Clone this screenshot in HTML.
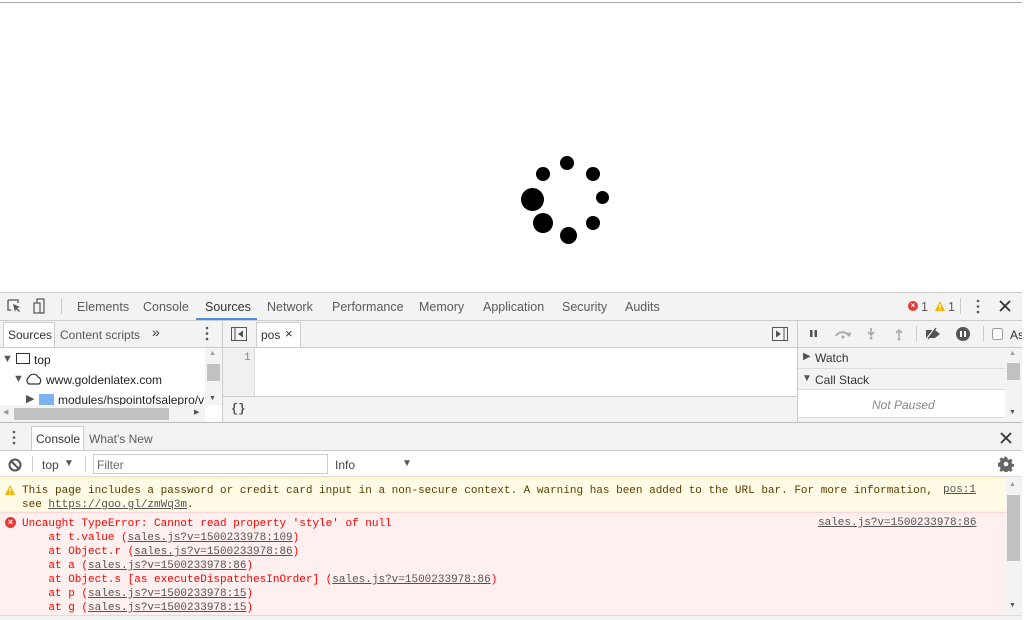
<!DOCTYPE html>
<html><head><meta charset="utf-8"><style>
*{box-sizing:border-box;margin:0;padding:0}
body{width:1034px;height:620px;background:#fff;position:relative;overflow:hidden;font-family:"Liberation Sans",sans-serif;font-size:12px;color:#333}
.a{position:absolute}
.dot{position:absolute;background:#000;border-radius:50%}
.mono{font-family:"Liberation Mono",monospace;font-size:11px}
.tab{position:absolute;top:300px;color:#5a5a5a;font-size:12.5px}
u{text-decoration:underline;color:#545454}
.err u{color:#545454}
</style></head><body>
<div class="a" style="left:0;top:2px;width:1022px;height:1px;background:#aaa"></div>
<div class="dot" style="left:560px;top:156px;width:14px;height:14px"></div>
<div class="dot" style="left:586px;top:167px;width:14px;height:14px"></div>
<div class="dot" style="left:596px;top:191px;width:13px;height:13px"></div>
<div class="dot" style="left:586px;top:216px;width:14px;height:14px"></div>
<div class="dot" style="left:560px;top:227px;width:17px;height:17px"></div>
<div class="dot" style="left:533px;top:213px;width:20px;height:20px"></div>
<div class="dot" style="left:521px;top:188px;width:23px;height:23px"></div>
<div class="dot" style="left:536px;top:167px;width:14px;height:14px"></div>

<div class="a" style="left:0;top:292px;width:1022px;height:328px;background:#f3f3f3;border-top:1px solid #ccc"></div>
<div class="a" style="left:0;top:320px;width:1022px;height:1px;background:#ccc"></div>
<svg class="a" style="left:7px;top:298px" width="42" height="18"><path d="M1 2h10v3M1 2v10h3" fill="none" stroke="#555" stroke-width="1.3"/><path d="M6 6l7 3-3 1 3 3-1 1-3-3-1 3z" fill="#555"/><rect x="27" y="5" width="6" height="10" fill="none" stroke="#555" stroke-width="1.2"/><path d="M30 5V1h7v14h-4" fill="none" stroke="#555" stroke-width="1.2"/></svg>
<div class="a" style="left:61px;top:298px;width:1px;height:16px;background:#ccc"></div>
<span class="tab" style="left:77px">Elements</span>
<span class="tab" style="left:143px">Console</span>
<span class="tab" style="left:205px;color:#333">Sources</span>
<div class="a" style="left:196px;top:318px;width:61px;height:2px;background:#4f8de6"></div>
<span class="tab" style="left:267px">Network</span>
<span class="tab" style="left:332px">Performance</span>
<span class="tab" style="left:419px">Memory</span>
<span class="tab" style="left:483px">Application</span>
<span class="tab" style="left:562px">Security</span>
<span class="tab" style="left:625px">Audits</span>
<div class="a" style="left:908px;top:301px;width:10px;height:10px;border-radius:50%;background:#e53935;color:#fff;font-size:8px;line-height:10px;text-align:center;font-weight:bold">×</div>
<span class="tab" style="left:921px">1</span>
<svg class="a" style="left:934px;top:300px" width="12" height="12"><path d="M6 1L11 11H1z" fill="#f4b400"/><rect x="5.4" y="4" width="1.2" height="4" fill="#fff"/><rect x="5.4" y="9" width="1.2" height="1.2" fill="#fff"/></svg>
<span class="tab" style="left:948px">1</span>
<div class="a" style="left:960px;top:298px;width:1px;height:16px;background:#ccc"></div>
<svg class="a" style="left:975px;top:299px" width="6" height="15"><circle cx="3" cy="2" r="1.3" fill="#555"/><circle cx="3" cy="7.5" r="1.3" fill="#555"/><circle cx="3" cy="13" r="1.3" fill="#555"/></svg>
<svg class="a" style="left:999px;top:300px" width="12" height="12"><path d="M1 1l10 10M11 1L1 11" stroke="#333" stroke-width="1.8"/></svg>

<div class="a" style="left:3px;top:322px;width:52px;height:25px;background:#fff;border:1px solid #ccc;border-bottom:none"></div>
<span class="a" style="left:8px;top:328px;color:#333">Sources</span>
<span class="a" style="left:60px;top:328px;color:#5a5a5a">Content scripts</span>
<span class="a" style="left:152px;top:324px;color:#333;font-size:14px">»</span>
<svg class="a" style="left:204px;top:326px" width="6" height="15"><circle cx="3" cy="2" r="1.3" fill="#555"/><circle cx="3" cy="7.5" r="1.3" fill="#555"/><circle cx="3" cy="13" r="1.3" fill="#555"/></svg>
<div class="a" style="left:222px;top:321px;width:1px;height:102px;background:#ccc"></div>
<svg class="a" style="left:231px;top:327px" width="16" height="14"><rect x=".5" y=".5" width="15" height="13" fill="none" stroke="#555"/><path d="M4 1v12" stroke="#555"/><path d="M12 3.5v7L7 7z" fill="#555"/></svg>
<div class="a" style="left:256px;top:322px;width:45px;height:25px;background:#fff;border:1px solid #ccc;border-bottom:none"></div>
<span class="a" style="left:261px;top:328px;color:#333">pos</span>
<span class="a" style="left:285px;top:326px;color:#333;font-size:13px">×</span>
<svg class="a" style="left:772px;top:327px" width="16" height="14"><rect x=".5" y=".5" width="15" height="13" fill="none" stroke="#555"/><path d="M12 1v12" stroke="#555"/><path d="M4 3.5v7L9 7z" fill="#555"/></svg>
<div class="a" style="left:797px;top:321px;width:1px;height:102px;background:#ccc"></div>
<svg class="a" style="left:805px;top:325px" width="230" height="18"><rect x="5" y="5" width="2.5" height="7" fill="#555"/><rect x="9.5" y="5" width="2.5" height="7" fill="#555"/><path d="M31 11a7 6 0 0 1 13 0" fill="none" stroke="#aaa" stroke-width="2"/><path d="M41 9l4 3 1-5z" fill="#aaa"/><circle cx="38" cy="12" r="1.5" fill="#aaa"/><path d="M66 3v6M63 7l3 3 3-3" fill="none" stroke="#aaa" stroke-width="1.6"/><circle cx="66" cy="13" r="1.5" fill="#aaa"/><path d="M94 12V5M91 8l3-3 3 3" fill="none" stroke="#aaa" stroke-width="1.6"/><circle cx="94" cy="14" r="1.5" fill="#aaa"/><rect x="111" y="1" width="1" height="15" fill="#ccc"/><path d="M121 5h9l5 4-5 4h-9z" fill="#555"/><path d="M121 15l10-13" stroke="#f3f3f3" stroke-width="2"/><path d="M123 14l8-11" stroke="#555" stroke-width="1.4"/><circle cx="158" cy="9" r="7" fill="#555"/><rect x="155" y="6" width="2" height="6" fill="#fff"/><rect x="159" y="6" width="2" height="6" fill="#fff"/><rect x="178" y="1" width="1" height="15" fill="#ccc"/><rect x="187.5" y="3.5" width="10" height="11" rx="2" fill="#fff" stroke="#999"/><text x="205" y="14" font-family="Liberation Sans" font-size="12" fill="#333">As</text></svg>
<div class="a" style="left:0;top:347px;width:1022px;height:1px;background:#ccc"></div>

<div class="a" style="left:0;top:348px;width:222px;height:74px;background:#fff"></div>
<span class="a" style="left:2px;top:353px;font-size:11px;color:#555">▼</span>
<div class="a" style="left:16px;top:353px;width:14px;height:11px;border:1.5px solid #333"></div>
<span class="a" style="left:34px;top:353px;color:#222">top</span>
<span class="a" style="left:13px;top:373px;font-size:11px;color:#555">▼</span>
<svg class="a" style="left:24px;top:372px" width="20" height="14"><path d="M5 12a4 4 0 0 1 0-7 5 5 0 0 1 9 0 4 4 0 0 1 1 7z" fill="none" stroke="#333" stroke-width="1.2"/></svg>
<span class="a" style="left:46px;top:373px;color:#222">www.goldenlatex.com</span>
<span class="a" style="left:26px;top:392px;font-size:11px;color:#555">▶</span>
<div class="a" style="left:39px;top:394px;width:15px;height:12px;background:#7bb2f0;border-radius:1px"></div>
<span class="a" style="left:58px;top:393px;color:#222;width:148px;overflow:hidden;white-space:nowrap;display:block">modules/hspointofsalepro/v</span>
<div class="a" style="left:205px;top:348px;width:17px;height:57px;background:#f3f3f3"></div>
<div class="a" style="left:207px;top:364px;width:13px;height:17px;background:#c1c1c1"></div>
<span class="a" style="left:209px;top:350px;font-size:7px;color:#999">▲</span>
<span class="a" style="left:209px;top:395px;font-size:7px;color:#555">▼</span>
<div class="a" style="left:0;top:405px;width:205px;height:17px;background:#f3f3f3"></div>
<div class="a" style="left:14px;top:408px;width:155px;height:12px;background:#c1c1c1"></div>
<span class="a" style="left:3px;top:408px;font-size:7px;color:#999">◀</span>
<span class="a" style="left:194px;top:408px;font-size:7px;color:#555">▶</span>

<div class="a" style="left:223px;top:348px;width:32px;height:48px;background:#f0f0f0;border-right:1px solid #ddd"></div>
<span class="a mono" style="left:244px;top:352px;color:#888">1</span>
<div class="a" style="left:255px;top:348px;width:542px;height:48px;background:#fff"></div>
<div class="a" style="left:223px;top:396px;width:574px;height:1px;background:#ccc"></div>
<span class="a mono" style="left:231px;top:402px;color:#555;font-weight:bold;font-size:12px">{}</span>

<span class="a" style="left:803px;top:351px;font-size:10px;color:#555">▶</span>
<span class="a" style="left:815px;top:351px;color:#333">Watch</span>
<div class="a" style="left:798px;top:368px;width:207px;height:1px;background:#ddd"></div>
<span class="a" style="left:802px;top:373px;font-size:10px;color:#555">▼</span>
<span class="a" style="left:815px;top:373px;color:#333">Call Stack</span>
<div class="a" style="left:798px;top:389px;width:207px;height:1px;background:#ddd"></div>
<div class="a" style="left:798px;top:390px;width:207px;height:28px;background:#fff;border-bottom:1px solid #ddd"></div>
<span class="a" style="left:872px;top:398px;color:#888;font-style:italic">Not Paused</span>
<div class="a" style="left:1006px;top:348px;width:16px;height:74px;background:#f3f3f3"></div>
<div class="a" style="left:1007px;top:363px;width:13px;height:17px;background:#c1c1c1"></div>
<span class="a" style="left:1009px;top:350px;font-size:7px;color:#999">▲</span>
<span class="a" style="left:1009px;top:409px;font-size:7px;color:#555">▼</span>
<div class="a" style="left:0;top:422px;width:1022px;height:1px;background:#bbb"></div>

<svg class="a" style="left:11px;top:430px" width="6" height="15"><circle cx="3" cy="2" r="1.3" fill="#555"/><circle cx="3" cy="7.5" r="1.3" fill="#555"/><circle cx="3" cy="13" r="1.3" fill="#555"/></svg>
<div class="a" style="left:31px;top:426px;width:53px;height:25px;background:#fff;border:1px solid #ccc;border-bottom:none"></div>
<span class="a" style="left:36px;top:432px;color:#333">Console</span>
<span class="a" style="left:89px;top:432px;color:#5a5a5a">What's New</span>
<svg class="a" style="left:1000px;top:432px" width="12" height="12"><path d="M1 1l10 10M11 1L1 11" stroke="#333" stroke-width="1.8"/></svg>
<div class="a" style="left:0;top:450px;width:1022px;height:1px;background:#ccc"></div>
<div class="a" style="left:0;top:451px;width:1022px;height:26px;background:#fff;border-bottom:1px solid #ddd"></div>
<svg class="a" style="left:8px;top:458px" width="14" height="14"><circle cx="7" cy="7" r="5.5" fill="none" stroke="#555" stroke-width="2"/><path d="M3 3l8 8" stroke="#555" stroke-width="2"/></svg>
<div class="a" style="left:32px;top:456px;width:1px;height:16px;background:#ccc"></div>
<span class="a" style="left:42px;top:458px;color:#444">top</span>
<span class="a" style="left:64px;top:458px;color:#555;font-size:10px">▼</span>
<div class="a" style="left:85px;top:456px;width:1px;height:16px;background:#ccc"></div>
<div class="a" style="left:93px;top:454px;width:235px;height:20px;border:1px solid #ccc;background:#fff"></div>
<span class="a" style="left:97px;top:458px;color:#666">Filter</span>
<span class="a" style="left:335px;top:458px;color:#444">Info</span>
<span class="a" style="left:402px;top:458px;color:#555;font-size:10px">▼</span>
<svg class="a" style="left:998px;top:456px" width="16" height="16" viewBox="0 0 16 16"><path d="M8 1l1.3.2.3 2 1.5.7 1.7-1.2 1.8 1.8-1.2 1.7.7 1.5 2 .3v2.6l-2 .3-.7 1.5 1.2 1.7-1.8 1.8-1.7-1.2-1.5.7-.3 2H6.7l-.3-2-1.5-.7-1.7 1.2-1.8-1.8 1.2-1.7-.7-1.5-2-.3V6.7l2-.3.7-1.5-1.2-1.7 1.8-1.8 1.7 1.2 1.5-.7.3-2z" fill="#666"/><circle cx="8" cy="8" r="2.3" fill="#fff"/></svg>

<div class="a" style="left:0;top:478px;width:1006px;height:34px;background:#fffbe5;border-top:1px solid #fff5c2;border-bottom:1px solid #fff5c2"></div>
<svg class="a" style="left:4px;top:484px" width="12" height="12"><path d="M6 1L11 11H1z" fill="#f4b400"/><rect x="5.4" y="4" width="1.2" height="4" fill="#fff"/><rect x="5.4" y="9" width="1.2" height="1.2" fill="#fff"/></svg>
<div class="a mono" style="left:22px;top:484px;color:#5c3c00;line-height:14px;white-space:pre">This page includes a password or credit card input in a non-secure context. A warning has been added to the URL bar. For more information,
see <u>https://goo.gl/zmWq3m</u>.</div>
<span class="a mono" style="left:943px;top:484px"><u>pos:1</u></span>
<div class="a" style="left:0;top:512px;width:1006px;height:103px;background:#fff0f0;border-top:1px solid #ffd6d6"></div>
<div class="a" style="left:5px;top:517px;width:11px;height:11px;border-radius:50%;background:#e53935;color:#fff;font-size:9px;line-height:11px;text-align:center;font-weight:bold">×</div>
<div class="a mono err" style="left:22px;top:517px;color:#f00;line-height:14px;white-space:pre">Uncaught TypeError: Cannot read property 'style' of null
    at t.value (<u>sales.js?v=1500233978:109</u>)
    at Object.r (<u>sales.js?v=1500233978:86</u>)
    at a (<u>sales.js?v=1500233978:86</u>)
    at Object.s [as executeDispatchesInOrder] (<u>sales.js?v=1500233978:86</u>)
    at p (<u>sales.js?v=1500233978:15</u>)
    at g (<u>sales.js?v=1500233978:15</u>)</div>
<span class="a mono" style="left:818px;top:517px"><u>sales.js?v=1500233978:86</u></span>
<div class="a" style="left:1006px;top:478px;width:16px;height:137px;background:#f3f3f3"></div>
<div class="a" style="left:1007px;top:495px;width:13px;height:66px;background:#c1c1c1"></div>
<span class="a" style="left:1009px;top:481px;font-size:7px;color:#999">▲</span>
<span class="a" style="left:1009px;top:602px;font-size:7px;color:#555">▼</span>
<div class="a" style="left:0;top:615px;width:1022px;height:5px;background:#f3f3f3;border-top:1px solid #ddd"></div>
<div class="a" style="left:1022px;top:0;width:12px;height:620px;background:#fff"></div>
</body></html>
